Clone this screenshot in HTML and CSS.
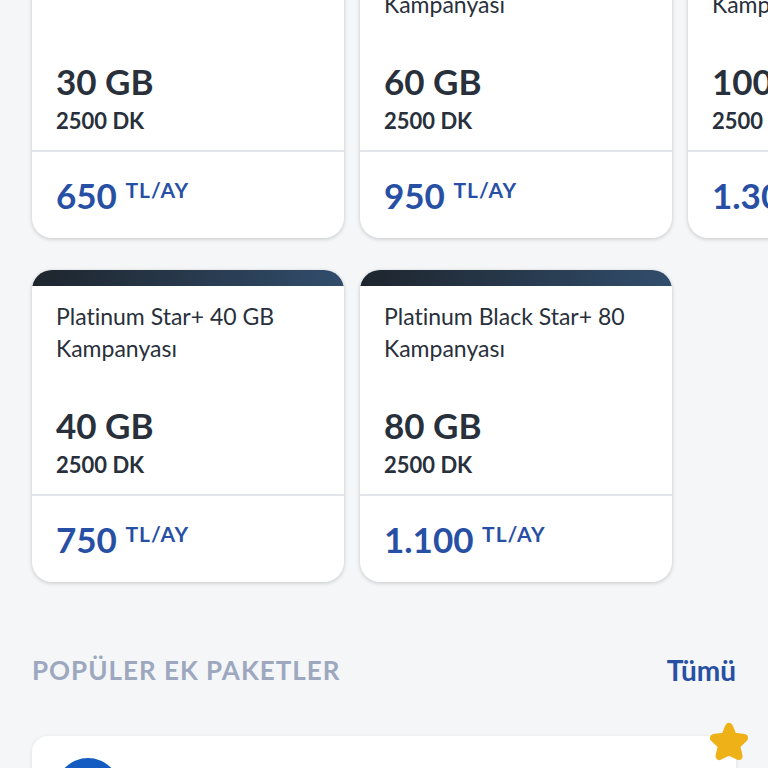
FILE: index.html
```html
<!DOCTYPE html>
<html lang="tr">
<head>
    <meta charset="UTF-8">
    <meta name="viewport" content="width=device-width, initial-scale=1.0">
    <title>Popüler Ek Paketler</title>
    <link rel="stylesheet" href="styles.css">
</head>
<body>
    <main class="page">
        <section class="row row-top">
            <article class="card">
                <div class="card-body">
                    <h3 class="card-title"></h3>
                    <p class="data">30 GB</p>
                    <p class="minutes">2500 DK</p>
                </div>
                <p class="price">650 <span class="unit">TL/AY</span></p>
            </article>
            <article class="card">
                <div class="card-body">
                    <h3 class="card-title">Kampanyası</h3>
                    <p class="data">60 GB</p>
                    <p class="minutes">2500 DK</p>
                </div>
                <p class="price">950 <span class="unit">TL/AY</span></p>
            </article>
            <article class="card">
                <div class="card-body">
                    <h3 class="card-title">Kampanyası</h3>
                    <p class="data">100 GB</p>
                    <p class="minutes">2500 DK</p>
                </div>
                <p class="price">1.300 <span class="unit">TL/AY</span></p>
            </article>
        </section>

        <section class="row">
            <article class="card card-banded">
                <div class="card-body">
                    <h3 class="card-title">Platinum Star+ 40 GB Kampanyası</h3>
                    <p class="data">40 GB</p>
                    <p class="minutes">2500 DK</p>
                </div>
                <p class="price">750 <span class="unit">TL/AY</span></p>
            </article>
            <article class="card card-banded">
                <div class="card-body">
                    <h3 class="card-title">Platinum Black Star+ 80 Kampanyası</h3>
                    <p class="data">80 GB</p>
                    <p class="minutes">2500 DK</p>
                </div>
                <p class="price">1.100 <span class="unit">TL/AY</span></p>
            </article>
        </section>

        <header class="section-head">
            <h2>POPÜLER EK PAKETLER</h2>
            <a href="#paketler">Tümü</a>
        </header>

        <section class="package" id="paketler">
            <div class="package-icon"></div>
            <svg class="star" viewBox="0 0 40 40" aria-hidden="true">
                <path d="M20 5 L24 14.5 L35 16 L27 23.5 L29.5 34 L20 29.5 L10.5 34 L13 23.5 L5 16 L16 14.5 Z"/>
            </svg>
        </section>
    </main>
</body>
</html>
```

FILE: styles.css
```css
* {
    box-sizing: border-box;
}
body {
    margin: 0;
    height: 100vh;
    overflow: hidden;
    background-color: #f4f6f8;
    color: #28303b;
    font-family: Lato, 'Open Sans', sans-serif;
    font-variant-ligatures: none;
}
h2, h3, p {
    margin: 0;
}
.page {
    padding: 0 32px;
}
.row {
    display: flex;
    gap: 16px;
    margin-bottom: 32px;
}
/* first row is scrolled past its card headers */
.row-top {
    margin-top: -12px;
}
.card {
    flex: 0 0 312px;
    background-color: #ffffff;
    border-radius: 20px;
    overflow: hidden;
    box-shadow: 0 1px 4px rgba(0, 0, 0, 0.2);
}
.row-top .card {
    border-radius: 0 0 20px 20px;
}
.card-banded::before {
    content: "";
    display: block;
    height: 16px;
    background: linear-gradient(100deg, #1e252d, #314d6c);
}
.card-body {
    padding: 0 24px 12px;
    border-bottom: 2px solid #e2e5e9;
}
.card-banded .card-body {
    padding-top: 14px;
}
.card-title {
    min-height: 32px;
    margin-bottom: 38px;
    font-size: 23px;
    font-weight: 400;
    line-height: 32px;
}
.data {
    font-size: 35px;
    font-weight: 700;
    line-height: 46px;
}
.minutes {
    font-size: 22px;
    font-weight: 700;
    line-height: 34px;
}
.price {
    padding: 20px 24px;
    color: #2750a5;
    font-size: 35px;
    font-weight: 700;
    line-height: 46px;
}
.unit {
    display: inline-block;
    font-size: 21px;
    line-height: 36px;
    letter-spacing: 1px;
    vertical-align: top;
}
.section-head {
    display: flex;
    justify-content: space-between;
    align-items: center;
    margin: 68px 0 46px;
}
.section-head h2 {
    color: #9da8bf;
    font-size: 26px;
    line-height: 40px;
    letter-spacing: 1px;
}
.section-head a {
    color: #2750a5;
    font-size: 28px;
    font-weight: 700;
    line-height: 40px;
    text-decoration: none;
}
.package {
    position: relative;
    padding: 22px 24px;
    background-color: #ffffff;
    border-radius: 16px;
    box-shadow: 0 1px 4px rgba(0, 0, 0, 0.1);
}
.package-icon {
    width: 64px;
    height: 64px;
    border-radius: 50%;
    background-color: #145cc2;
}
.star {
    position: absolute;
    top: -14px;
    right: -13px;
    width: 40px;
    height: 40px;
    fill: #efb118;
    stroke: #efb118;
    stroke-width: 8;
    stroke-linejoin: round;
}
```
